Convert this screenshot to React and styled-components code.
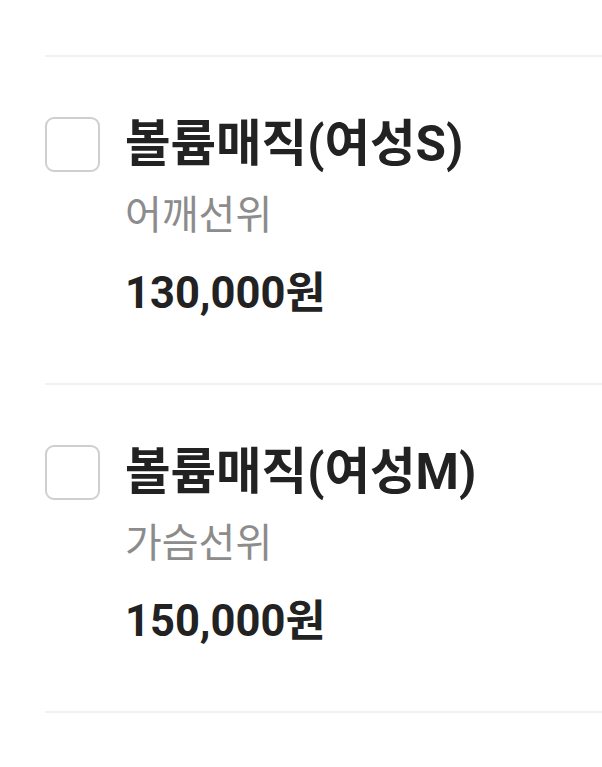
import React from "react";
import styled, { createGlobalStyle } from "styled-components";

const GlobalStyle = createGlobalStyle`
  body {
    margin: 0;
    background: #fff;
    font-family: Roboto, "Noto Sans CJK KR", sans-serif;
  }
`;

const items = [
  { id: 1, name: "볼륨매직(여성S)", desc: "어깨선위", price: "130,000원" },
  { id: 2, name: "볼륨매직(여성M)", desc: "가슴선위", price: "150,000원" },
];

const MenuList = () => {
  const [checked, setChecked] = React.useState({});

  return (
    <>
      <GlobalStyle />
      <ListWrap>
        {items.map((item) => (
          <ItemRow key={item.id}>
            <CheckBox
              checked={!!checked[item.id]}
              onClick={() => setChecked({ ...checked, [item.id]: !checked[item.id] })}
            />
            <ItemInfo>
              <ItemName>{item.name}</ItemName>
              <ItemDesc>{item.desc}</ItemDesc>
              <ItemPrice>{item.price}</ItemPrice>
            </ItemInfo>
          </ItemRow>
        ))}
      </ListWrap>
    </>
  );
};

const ListWrap = styled.div`
  padding-top: 55px;
  padding-left: 45px;
`;

const ItemRow = styled.div`
  display: flex;
  align-items: flex-start;
  gap: 25px;
  padding: 59px 0 65px;
  border-top: 2px solid #f1f1f1;

  &:last-child {
    border-bottom: 2px solid #f1f1f1;
  }
`;

const CheckBox = styled.div`
  flex: none;
  width: 51px;
  height: 51px;
  margin-top: 1px;
  border: 2px solid ${(props) => (props.checked ? "#222" : "#cfcfcf")};
  border-radius: 9px;
  background: ${(props) => (props.checked ? "#222" : "#fff")};
  cursor: pointer;
`;

const ItemInfo = styled.div`
  display: flex;
  flex-direction: column;
`;

const ItemName = styled.div`
  font-size: 49.5px;
  line-height: 56px;
  font-weight: 700;
  color: #222;
`;

const ItemDesc = styled.div`
  margin-top: 22px;
  font-size: 40px;
  line-height: 44px;
  color: #8c8c8c;
`;

const ItemPrice = styled.div`
  margin-top: 32px;
  font-size: 43.5px;
  line-height: 48px;
  font-weight: 700;
  color: #222;
`;

export default MenuList;
